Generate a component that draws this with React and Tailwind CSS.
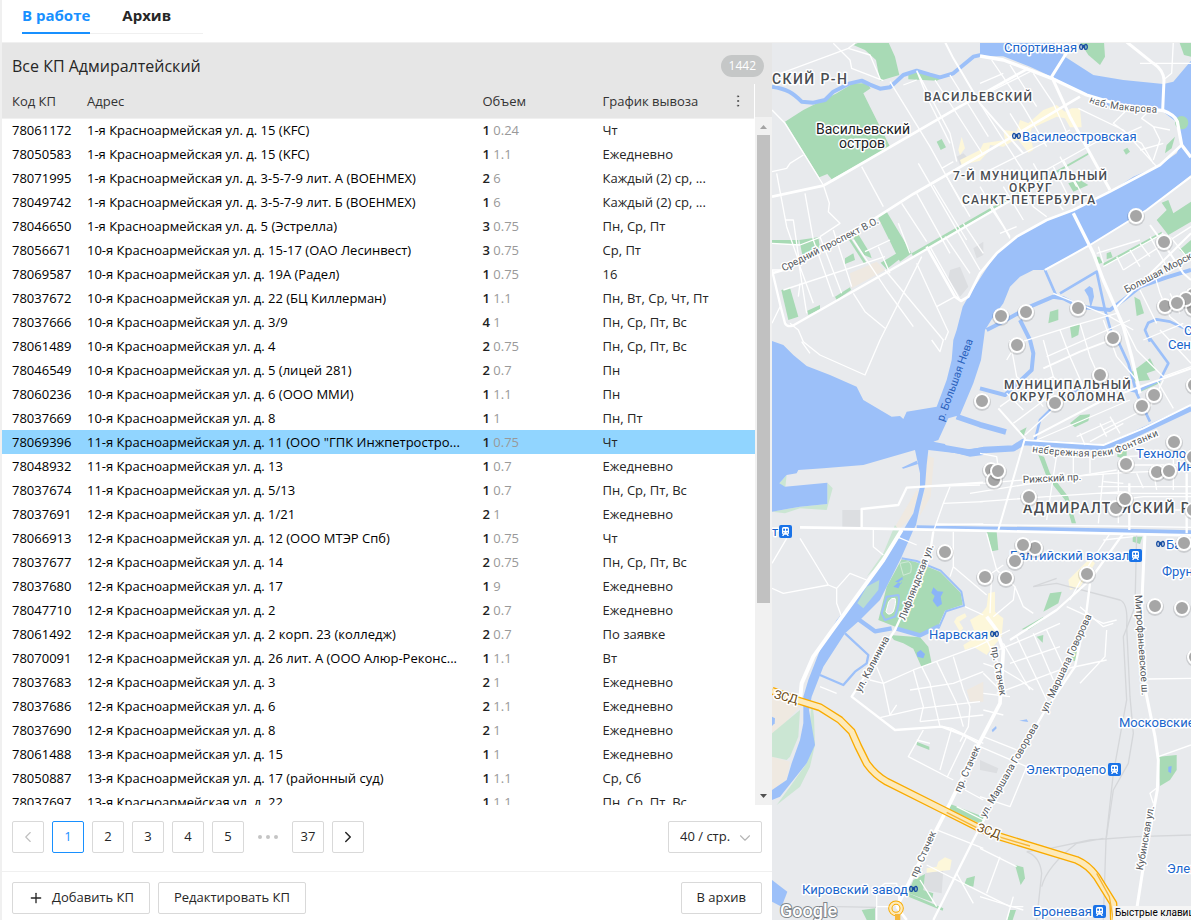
import { ChevronLeft, ChevronRight, ChevronDown, Plus, EllipsisVertical } from "lucide-react";

const ROWS = [
    ["78061172", "1-я Красноармейская ул. д. 15 (KFC)", 1, "0.24", "Чт"],
    ["78050583", "1-я Красноармейская ул. д. 15 (KFC)", 1, "1.1", "Ежедневно"],
    ["78071995", "1-я Красноармейская ул. д. 3-5-7-9 лит. А (ВОЕНМЕХ)", 2, "6", "Каждый (2) ср, ..."],
    ["78049742", "1-я Красноармейская ул. д. 3-5-7-9 лит. Б (ВОЕНМЕХ)", 1, "6", "Каждый (2) ср, ..."],
    ["78046650", "1-я Красноармейская ул. д. 5 (Эстрелла)", 3, "0.75", "Пн, Ср, Пт"],
    ["78056671", "10-я Красноармейская ул. д. 15-17 (ОАО Лесинвест)", 3, "0.75", "Ср, Пт"],
    ["78069587", "10-я Красноармейская ул. д. 19А (Радел)", 1, "0.75", "16"],
    ["78037672", "10-я Красноармейская ул. д. 22 (БЦ Киллерман)", 1, "1.1", "Пн, Вт, Ср, Чт, Пт"],
    ["78037666", "10-я Красноармейская ул. д. 3/9", 4, "1", "Пн, Ср, Пт, Вс"],
    ["78061489", "10-я Красноармейская ул. д. 4", 2, "0.75", "Пн, Ср, Пт, Вс"],
    ["78046549", "10-я Красноармейская ул. д. 5 (лицей 281)", 2, "0.7", "Пн"],
    ["78060236", "10-я Красноармейская ул. д. 6 (ООО ММИ)", 1, "1.1", "Пн"],
    ["78037669", "10-я Красноармейская ул. д. 8", 1, "1", "Пн, Пт"],
    ["78069396", "11-я Красноармейская ул. д. 11 (ООО \"ГПК Инжпетростро...", 1, "0.75", "Чт"],
    ["78048932", "11-я Красноармейская ул. д. 13", 1, "0.7", "Ежедневно"],
    ["78037674", "11-я Красноармейская ул. д. 5/13", 1, "0.7", "Пн, Ср, Пт, Вс"],
    ["78037691", "12-я Красноармейская ул. д. 1/21", 2, "1", "Ежедневно"],
    ["78066913", "12-я Красноармейская ул. д. 12 (ООО МТЭР Спб)", 1, "0.75", "Чт"],
    ["78037677", "12-я Красноармейская ул. д. 14", 2, "0.75", "Пн, Ср, Пт, Вс"],
    ["78037680", "12-я Красноармейская ул. д. 17", 1, "9", "Ежедневно"],
    ["78047710", "12-я Красноармейская ул. д. 2", 2, "0.7", "Ежедневно"],
    ["78061492", "12-я Красноармейская ул. д. 2 корп. 23 (колледж)", 2, "0.7", "По заявке"],
    ["78070091", "12-я Красноармейская ул. д. 26 лит. А (ООО Алюр-Реконс...", 1, "1.1", "Вт"],
    ["78037683", "12-я Красноармейская ул. д. 3", 2, "1", "Ежедневно"],
    ["78037686", "12-я Красноармейская ул. д. 6", 2, "1.1", "Ежедневно"],
    ["78037690", "12-я Красноармейская ул. д. 8", 2, "1", "Ежедневно"],
    ["78061488", "13-я Красноармейская ул. д. 15", 1, "1", "Ежедневно"],
    ["78050887", "13-я Красноармейская ул. д. 17 (районный суд)", 1, "1.1", "Ср, Сб"],
    ["78037697", "13-я Красноармейская ул. д. 22", 1, "1.1", "Пн, Ср, Пт, Вс"],
];

const SELECTED = "78069396";

// Map geometry, in thirds of a pixel
const WATER = [
    "M630 6H850L885 50L970 105L1060 120L1180 132L1210 125L1263 62V405L1130 510L960 615L820 690L790 690L750 710L720 740L700 790L670 830L645 870L633 960L610 1030L570 1125L535 1135L505 1200L490 1205L525 1212L530 1222L570 1228L600 1227L640 1222V1245L600 1250L560 1240L475 1230L470 1275L465 1340L450 1400L438 1455L430 1470L395 1550L330 1680L270 1740L225 1780L160 1880L125 1970L117 2010L135 2115L110 2170L70 2220L30 2270L6 2280V2250L50 2220L65 2170L90 2100L100 2050V1970L115 1920L150 1830L200 1740L300 1620L350 1550L400 1470L430 1420L450 1340V1300L435 1230L280 1275L160 1285L85 1290L80 1300L50 1305L28 1330L45 1340L172 1328V1392L90 1400L6 1415V903L40 915L70 945L110 978L180 1005L260 1040L280 1080L365 1130L390 1128L400 1137L410 1115L500 1100L530 1020L545 960L550 900L560 870L578 800L595 770L640 700L680 640L740 590L830 540L910 510L1020 455L1090 410L1170 375L1220 340L1235 310L1225 250L1175 212L1030 205L950 165L845 110L780 80L690 45H630Z",
    "M6 2520L52 2555L35 2600L6 2585Z",
    "M395 1283L440 1262L444 1272L400 1286Z",
    "M943 750L958 738L968 745L972 770L962 805L955 770Z",
    "M6 2030L15 2035L14 2050L6 2058Z",
    "M665 2070L678 2058L680 2065L668 2077Z",
    "M748 2042L770 2038L775 2046Z",
];

const RIVERS = [
    ["M6 140C50 146 70 160 95 185L130 188L165 180L190 155L240 130L275 122L300 134L330 146L360 142L400 105L440 92L480 104L510 112L550 100L580 75L610 50L640 43H700", 12],
    ["M440 1462L630 1466L830 1468L1030 1472L1263 1477", 13],
    ["M490 1218L600 1238L640 1230L730 1225L760 1206L1000 1222L1080 1190L1263 1104", 19],
    ["M560 1130L630 1154L708 1176", 17],
    ["M650 870L690 850L780 800L850 770L880 775L930 800L1020 810L1060 780L1110 740L1190 712L1263 690", 12],
    ["M750 840L780 900L790 940L785 990L705 1065L630 1045", 12],
    ["M825 690L860 770M870 760L980 695L1005 810L1022 870L1045 905L1075 970L1100 1060L1140 1145", 8],
    ["M1140 905L1125 870L1135 848L1160 838L1200 845L1263 875M1140 895L1195 970L1170 1020L1100 1055L1000 1030L920 1050L850 1100L810 1140L795 1200", 8],
    ["M150 1905L220 1935L255 1895L290 1870L295 1845L225 1780", 7],
    ["M395 1555L440 1563L512 1592L574 1655L582 1697L528 1714L508 1760", 6],
    ["M508 1758L450 1786L380 1766M365 1765L315 1774L265 1738", 13],
];

const GREENS = [
    "M45 245L100 210L200 160L250 130L290 130L302 145L280 160L300 200L350 300L360 320L185 418L172 402L148 412Z",
    "M250 15L270 6H355L375 50L388 105L330 122L318 60L285 30Z",
    "M415 100L470 98L515 115L500 122L415 118Z",
    "M500 305L515 297L528 322L512 330Z",
    "M322 528L350 515L425 640L390 665Z",
    "M425 640L630 522L955 338V344L630 532L430 652Z",
    "M332 668L380 640L392 655L350 688Z",
    "M248 590L262 578L300 640L305 655L282 645Z",
    "M237 600L243 597L290 668L283 672Z",
    "M88 600L145 592L150 625L100 660Z",
    "M225 655L250 640L255 660L225 672Z",
    "M34 750L60 743L85 830L55 840Z",
    "M112 812L150 795V808L115 825Z",
    "M195 770L240 742L243 750L200 780Z",
    "M6 600H85V612H6Z",
    "M930 6H1002L1005 50L990 75L955 45Z",
    "M1228 6H1263V50L1242 45Z",
    "M1215 248A20 20 0 1 1 1255 248A20 20 0 1 1 1215 248Z",
    "M1185 340L1190 315L1215 290L1205 325Z",
    "M1060 330L1072 323L1080 335L1068 344Z",
    "M895 430L930 420L955 435L910 455Z",
    "M1160 540L1190 510L1175 488L1195 480L1210 520L1263 485V545L1195 585Z",
    "M1000 670L1175 575V585L1002 680Z",
    "M980 650H988L998 668L985 672ZM1010 640L1022 635L1028 652L1010 658Z",
    "M1228 630L1263 600V640L1245 645Z",
    "M1093 770L1110 780L1122 820L1100 828Z",
    "M840 815L865 808V840L835 850Z",
    "M900 860L930 850L925 885L905 895Z",
    "M1080 1000L1140 955L1158 990L1130 1000L1140 1020L1090 1025Z",
    "M1108 1052L1165 1020L1172 1028L1112 1055Z",
    "M900 1150L930 1125L960 1123L955 1143L915 1162Z",
    "M1042 1230H1070V1260L1042 1250Z",
    "M805 1245L822 1250L840 1300L895 1370L918 1450H905L885 1380L830 1310Z",
    "M650 1475H680L685 1530L665 1534Z",
    "M1088 1490H1117L1110 1512L1088 1505Z",
    "M840 1660L875 1655L865 1690L820 1715Z",
    "M755 1768L820 1730L822 1738L775 1770Z",
    "M745 1175L770 1162L760 1190Z",
    "M395 1558L435 1565L510 1595L572 1658L578 1694L525 1712L505 1758L455 1785L380 1762L325 1740L350 1640Z",
    "M360 1785L450 1792L475 1820L485 1870L455 1882L430 1826L400 1810L372 1800Z",
    "M440 2105L478 2120V2130L440 2115Z",
    "M535 2290L640 2330V2355L540 2310Z",
    "M430 2520L465 2502L460 2550L490 2560L485 2585L415 2560Z",
    "M590 2515L615 2508L610 2540L582 2535Z",
    "M275 2610L315 2605V2640H290Z",
    "M415 2560L520 2605L518 2612L410 2568Z",
    "M1167 2150L1220 2145V2190L1200 2220L1170 2238Z",
    "M905 1820L920 1812V1865L905 1860Z",
    "M735 2475L760 2482L765 2515L752 2535Z",
    "M800 1790L820 1785L818 1808Z",
    "M720 2610H738L728 2640H712Z",
];

const PALE_GREENS = [
    "M6 2080L90 2010L85 2090L60 2150L50 2160L6 2150Z",
    "M125 1980L132 2030L135 2115L120 2180L90 2240L20 2295L60 2240L110 2170Z",
    "M28 1330L50 1305L45 1350L30 1350Z",
    "M172 1328L188 1345L170 1410L90 1405L45 1420L6 1415L90 1400L172 1392Z",
    "M375 1455L390 1475L340 1560L290 1610L340 1540Z",
];

const TANS = [
    "M240 700L320 665L345 690L245 745Z",
    "M6 1955L90 2000L6 2090Z",
    "M6 2150L60 2165L50 2220L6 2250Z",
    "M470 1245L492 1255L482 1370L448 1430L465 1340Z",
    "M440 1350L450 1360L425 1430L385 1470L375 1460Z",
    "M590 1950L640 1925V1985H600Z",
    "M1170 390L1235 320L1230 345Z",
];

const YELLOWS = [
    "M820 210L860 195L885 215L905 205L930 205L935 262L900 262L885 235L860 230L785 265L780 280L790 330L775 338L745 300L725 305L700 320L660 315L655 335L630 362L575 375L570 360L630 330L640 310L705 300L700 270L740 275L750 240L775 250Z",
    "M575 290L585 325L570 345L565 330Z",
    "M655 1660L675 1655V1715L700 1735L695 1790L665 1825L650 1845L610 1820L585 1830L580 1815L620 1790L600 1740L635 1720L650 1700Z",
    "M585 1720L560 1732L552 1745L570 1775L580 1765L568 1745L590 1730Z",
    "M895 1620L960 1555L975 1570L930 1640L900 1650Z",
    "M505 2465L525 2452L545 2460L540 2490L470 2498V2485L500 2480Z",
];

const GRAYS = [
    "M217 1410H272V1465H217Z",
    "M540 690L570 680L595 740L570 770L535 715Z",
    "M560 350L580 340L600 360L570 375Z",
    "M465 2500L520 2490L515 2560L460 2550Z",
    "M630 2160L685 2185L680 2200L630 2190Z",
    "M610 625L640 605V645L620 655Z",
];

const MINOR_ROADS = [
    "M190 10L240 60L245 85L340 122M235 25L300 45L332 120M6 110L235 25L255 10M6 210L45 250L160 435",
    "M360 125L480 320L580 500M440 92L540 280L560 365M495 120L640 345M540 105L655 290M400 135L440 120M440 92L475 180L540 310",
    "M275 380L340 500M445 370L630 690M395 490L470 605M440 460L540 640M490 435L590 600M530 410L600 530M515 385L550 365",
    "M6 395L50 385L60 370L100 345M20 400L35 480L50 560L85 660L110 820M160 435L178 490L175 515L210 550L150 590M45 540H70L90 680L130 790",
    "M6 610L90 615L150 592M105 460L130 600L190 770M150 590L215 760M190 570L245 740M6 690L60 690M40 750L345 650M250 600L350 750L430 860M90 730L85 770",
    "M345 690L520 900L510 935L485 900M455 650L330 900L285 1005L150 945L100 905L85 870L60 850M250 760L285 815L345 865M285 635L360 600M325 620L360 700",
    "M440 670L500 800L555 770M500 800L535 875L525 900M480 620L570 780M525 590L600 700M580 550L640 640M385 550L420 640",
    "M630 190L700 300L790 440M665 60L760 200L830 320M720 75L800 200M790 100L850 190L900 300M700 100L630 130M790 90L630 170",
    "M660 500L700 560L720 595M700 440L760 540M740 410L790 500L830 530M790 370L840 460L880 510M850 380L900 480M880 360L940 470M630 440L720 590M690 580L740 560",
    "M720 450L990 300M640 400L900 270M870 350L920 440M720 220L770 300",
    "M925 205L1060 270L1160 380M1065 215L1030 250L1070 280L1115 260M1130 220L1115 235L1150 260L1170 300L1150 360M1060 280L1115 310L1150 370M1150 260L1200 270M1110 330L1180 310",
    "M850 760L1020 830L1090 870M980 640L1110 600M1000 680L1180 580M985 620L1000 670M1040 650L1060 690M1080 630L1110 680M1110 610L1140 650M1140 590L1190 680M1200 590L1250 650M1060 690L1263 560",
    "M710 960L740 910L900 860L1040 820M830 950L1080 840M720 900L740 1010L800 1060M820 900L850 1010L900 1060M870 870L900 950L940 1040M930 850L960 950L1000 1040M1000 840L1040 950L1100 1020",
    "M1150 690L1170 760L1200 830L1263 880M1110 750L1160 850M1200 760L1230 820M1050 830L1100 930L1180 1010L1263 980M1120 900L1240 850M1170 870L1263 970M1210 1105L1160 1020",
    "M690 1100L760 1050L850 1010M730 1150L850 1060M765 1185L880 1080M710 1060L760 1110M760 1030L820 1100M800 1200L1080 1080M920 1190L1030 1140M960 1205L1060 1150M930 1180L945 1215M990 1150L1010 1190M1020 1130L1050 1180M1000 1170L1140 1100L1180 1020",
    "M640 1330L760 1320L1060 1298L1263 1290M630 1385L830 1370L1060 1355M860 1245L830 1440M910 1250V1300M960 1250V1300M1000 1300L985 1450M1045 1290V1450M630 1240L680 1250L690 1320M985 1340H1263M985 1360H1263M1060 1250L1263 1240M1060 1275H1263",
    "M1040 1380L1120 1370H1263M1100 1300L1120 1345M1150 1290L1160 1350M1210 1250V1350M1000 1325L1060 1330M1080 1410H1263",
    "M520 1390L640 1385M495 1455L640 1452M540 1340L520 1390L490 1475M455 1340L630 1335",
    "M310 1465V1520L340 1545M90 1495L130 1560L175 1635L40 1660L6 1645M50 1495L6 1570M175 1635L200 1645L240 1600L290 1620M200 1645V1690L215 1730",
    "M550 1475V1580L650 1665M550 1580L540 1610M585 1700L640 1725",
    "M650 1480L680 1590L735 1640L730 1680L670 1730M700 1575L665 1600L660 1720M1020 1480L960 1570L900 1680M735 1640L760 1700L790 1720M890 1700L1000 1750L1040 1740M1000 1500L1090 1490",
    "M320 1880L340 1930L360 2025M300 1920L340 1930L430 1890L620 1820L720 1770M430 1890L460 2000L450 2045M455 1880L480 1930L510 2060M500 1865L560 1990L580 2060M550 1850L580 1950L600 2000L595 2060L570 2105",
    "M330 2033L450 2005L630 1985M360 2025L380 1995M420 1950L550 1930L640 1895M450 2045L640 2025M545 2065L510 2190M590 2090L530 2215M460 2070L415 2150L550 2220M440 2100L480 2110M520 2060L545 2065L640 2110",
    "M640 1870L700 1890L750 1920L790 1950M660 1840L780 1790L870 1750M720 1870L870 1820M700 1810L780 1950M740 1790L830 1980M790 1780L850 1920M830 1770L890 1900M680 1960L870 1890L1010 1860M640 1780L700 1900M1010 1770L1005 1850L930 1930",
    "M640 1960L720 1970M640 1900L700 1960M640 2010L700 2025M640 2090L740 2130M630 2120L770 2180L720 2300L630 2270M500 2370L640 2425M470 2475L640 2560L720 2600H760M585 2250L640 2280M560 2300L640 2340",
    "M630 2570L760 2610M630 2425L740 2480M690 2450L650 2560M730 2570L710 2640M500 2600L450 2520M560 2500L610 2590M320 2600H370M345 2530L320 2550V2640M345 2530H380L390 2600",
    "M1135 1917L1263 1915M1165 2150L1263 2115M1150 2290L1140 2260L1165 2240M930 1700L1000 1760L1030 1750",
    "M380 1490L440 1515M600 1360L1040 1290M1110 70H1263M1180 120L1205 100L1210 6",
    "M150 1940L200 1960M6 850L30 800M95 905L120 940",
];

const ROADS = [
    ["M6 470L160 437L190 420L560 205L775 85", 8],
    ["M6 700L40 690L300 545L430 462L630 347L930 170", 8],
    ["M6 690L32 800L45 850Q52 862 68 857L400 668L630 535L860 400", 7],
    ["M525 6L550 55L630 190L760 340", 6],
    ["M630 48L700 60L845 115L950 165L1060 198L1180 212Q1215 225 1222 245L1235 315L1263 352", 10],
    ["M895 30L845 110L900 230L1020 450", 9],
    ["M1070 6L1150 70Q1180 90 1182 120L1178 212", 9],
    ["M1235 315L1170 375L1020 455L910 510L830 540L740 590L680 640L630 700L595 770L573 783L555 770L470 620", 8],
    ["M910 520L970 640L1000 720L1035 800L1060 860L1085 950L1110 1060", 10],
    ["M825 690L960 615L1130 510L1263 410", 6],
    ["M1140 555L1180 610L1240 700L1263 720M1263 580L1040 800M820 985L930 935L1035 895", 6],
    ["M685 1105L765 1195L685 1470", 6],
    ["M765 1200L1000 1215L1120 1165L1263 1095M790 1190L1000 1080L1263 985", 6],
    ["M275 1465V1407L385 1395L410 1343L460 1340L640 1328", 7],
    ["M90 1462L275 1465L630 1472L1263 1486", 8],
    ["M500 1452L690 1455L1020 1458L1263 1462", 4],
    ["M395 1470L340 1560L180 1780L130 1850L95 1930L90 1980", 12],
    ["M490 1475L480 1540L375 1770L245 1970L375 2070L515 2060L580 2085L625 2110", 7],
    ["M650 1730L680 1770L700 1830L690 1990L630 2105L540 2290L380 2600", 11],
    ["M1060 1480L960 1620L860 1710L720 1800", 7],
    ["M1078 1330V1470M1250 1300V1480", 7],
    ["M960 1630L950 1710L930 1810L915 1880L820 2020L700 2230L610 2400L490 2640", 7],
    ["M1125 1480L1115 1700L1120 1920L1155 2090L1165 2160L1162 2250L1120 2480L1095 2640", 9],
    ["M380 2600L410 2640", 8],
];

const RAILS = [
    "M790 1640L860 1630L1050 1680Q1075 1690 1070 1760L1080 1970L1090 2080L1075 2170L1030 2250L1008 2400L1000 2640",
    "M1100 1480L1095 1700L1060 1790L1070 1980L1030 2200L1008 2400",
    "M1263 2385L1100 2390L960 2400L840 2425L770 2435M770 2435Q810 2450 815 2500L800 2640M815 2540Q830 2480 920 2410L1000 2395",
    "M200 2600L320 2602M790 1640L860 1615",
];

const HIGHWAY = "M6 1952L80 1980L150 2002L210 2040L245 2075L265 2120L290 2170Q315 2205 350 2225L520 2310L630 2365L690 2390L920 2460Q955 2475 980 2510L1030 2590L1032 2640";

const PINS = [
    [1136, 216], [1164, 242], [1078, 308], [1026, 312], [1001, 316], [1193, 295], [1193, 308], [1186, 299], [1165, 306],
    [1177, 303], [1017, 345], [1113, 338], [1100, 375], [1154, 395], [1142, 406], [1055, 403], [982, 401], [1194, 385],
    [1174, 442], [1126, 464], [1157, 472], [1169, 471], [1193, 457], [991, 470], [994, 480], [998, 471], [1029, 497],
    [1116, 508], [1125, 499], [1193, 510], [1184, 543], [1035, 548], [1023, 545], [1015, 561], [985, 577], [1006, 578],
    [1087, 574], [945, 552], [1155, 606], [1182, 608], [1195, 657],
];

const AREAS = [
    ["СКИЙ Р-Н", 772, 84, 14],
    ["ВАСИЛЬЕВСКИЙ", 924, 101, 12],
    ["7-Й МУНИЦИПАЛЬНЫЙ", 953, 180, 12],
    ["ОКРУГ", 1009, 192, 12],
    ["САНКТ-ПЕТЕРБУРГА", 962, 204, 12],
    ["МУНИЦИПАЛЬНЫЙ", 1004, 389, 12],
    ["ОКРУГ КОЛОМНА", 1010, 401, 12],
    ["АДМИРАЛТЕЙСКИЙ Р-Н", 1023, 513, 14],
];

const STATIONS = [
    ["Спортивная", 1004, 52],
    ["Василеостровская", 1022, 141],
    ["Сен", 1168, 349],
    ["С", 1184, 335],
    ["Техноло", 1136, 458],
    ["Инс", 1177, 471],
    ["Балтийский вокзал", 1010, 560],
    ["Ба", 1166, 549],
    ["Фрун", 1162, 576],
    ["т", 772, 536],
    ["Нарвская", 929, 639],
    ["Московские", 1119, 727],
    ["Электродепо", 1026, 774],
    ["Элек", 1167, 873],
    ["Кировский завод", 802, 894],
    ["Броневая", 1033, 916],
];

// text, centre x, centre y, angle
const STREETS = [
    ["Средний проспект В.О.", 830, 244, -27],
    ["Большая Морская", 1163, 270, -28],
    ["Рижский пр.", 1052, 478, -3],
    ["Лифляндская ул.", 916, 582, -69],
    ["ул. Калинина", 872, 664, -62],
    ["пр. Стачек", 999, 671, 80],
    ["ул. Маршала Говорова", 1066, 663, -65],
    ["ул. Маршала Говорова", 1009, 770, -60],
    ["пр. Стачек", 967, 769, -66],
    ["пр. Стачек", 923, 854, -66],
    ["Митрофаньевское ш.", 1142, 645, 86],
    ["Кубинская ул.", 1145, 838, -80],
    ["ЗСД", 786, 697, 14],
    ["ЗСД", 989, 831, 20],
];

function MetroIcon({ x, y }) {
    return (
        <g transform={`translate(${x} ${y})`} fill="none" stroke="#1a4fa3" strokeWidth="1.4" strokeLinecap="round">
            <path d="M1.6 1.6C.2 3 .4 6.400 2.300 6.400C4.200 6.400 3.400 1.500 2.500 1.500M7.400 1.600C8.800 3 8.600 6.400 6.700 6.400C4.800 6.400 5.600 1.500 6.500 1.500M4.500 2.500V4.500" />
        </g>
    );
}

function TrainIcon({ x, y }) {
    return (
        <g transform={`translate(${x} ${y})`}>
            <rect width="13" height="13" rx="2" fill="#1a73e8" />
            <path d="M4.500 2h4a1.500 1.500 0 0 1 1.500 1.500v4.500a1.500 1.500 0 0 1-1 1.400l1 1.600h-1.500l-.8-1.300h-2.400l-.8 1.300h-1.500l1-1.600a1.500 1.500 0 0 1-1-1.400v-4.500a1.500 1.500 0 0 1 1.500-1.500z" fill="#fff" />
            <path d="M4.200 3.700h1.800v2h-1.800zM7 3.700h1.800v2h-1.800zM4.300 7.300h1v1h-1zM7.700 7.300h1v1h-1z" fill="#1a73e8" />
        </g>
    );
}

function CityMap() {
    return (
        <div className="relative overflow-hidden bg-[#e8eaed] min-h-0">
            <svg
                viewBox="772 43 419 877"
                preserveAspectRatio="xMinYMin slice"
                className="block w-full h-full font-[Roboto,sans-serif]"
                role="img"
                aria-label="Карта"
            >
                <g transform="translate(770 40) scale(0.33333)" fill="none" strokeLinejoin="round">
                    {TANS.map((d) => <path key={d} d={d} fill="#efe9e1" />)}
                    {GRAYS.map((d) => <path key={d} d={d} fill="#dcdee1" />)}
                    {YELLOWS.map((d) => <path key={d} d={d} fill="#fdf7da" />)}
                    {PALE_GREENS.map((d) => <path key={d} d={d} fill="#cbe6d3" />)}
                    {WATER.map((d) => <path key={d} d={d} fill="#9cc0f9" />)}
                    {GREENS.map((d) => <path key={d} d={d} fill="#a8dab5" />)}
                    <path d="M262 1690L290 1640L328 1620L325 1650L280 1705Z" fill="#b9ddd0" />
                    <path d="M440 1838L452 1830L465 1842L460 1855L442 1850Z" fill="#8ab4f8" />
                    <path d="M490 1642L503 1654L520 1655L512 1670L516 1692L502 1701L488 1682L494 1668L484 1658Z" fill="#8ab4f8" />
                    <path d="M370 1640L400 1615L385 1645ZM375 1625L395 1630L398 1610Z" fill="#8ab4f8" />
                    <path d="M390 1570L415 1565Q428 1570 422 1598L400 1606Z" stroke="#cfe9d6" strokeWidth="3" />
                    <path d="M1195 2180L1205 2178L1203 2200L1195 2195Z" fill="#8ab4f8" />
                    <path d="M350 1670L385 1665Q392 1680 375 1730L345 1740L335 1720Z" stroke="#9cc0f9" strokeWidth="6" />
                    <path d="M356 1685Q365 1672 375 1675Q380 1685 370 1715Q355 1730 348 1715Z" fill="#e8eaed" stroke="#fff" strokeWidth="3" />
                    {RAILS.map((d) => <path key={d} d={d} stroke="#d5d7da" strokeWidth="4" />)}
                    {RIVERS.map(([d, w]) => <path key={d} d={d} stroke="#9cc0f9" strokeWidth={w} />)}
                    {MINOR_ROADS.map((d) => <path key={d} d={d} stroke="#fff" strokeWidth="4" />)}
                    {ROADS.map(([d, w]) => <path key={d} d={d} stroke="#fff" strokeWidth={w} />)}
                    <path d={HIGHWAY} stroke="#f9ab00" strokeWidth="24" />
                    <path d={HIGHWAY} stroke="#fdeaba" strokeWidth="16" />
                    <path d="M530 2317L630 2368L685 2390L780 2418M980 2500L1018 2570L1030 2640" stroke="#f5b73b" strokeWidth="4" />
                    <circle cx="378" cy="2605" r="17" stroke="#f9ab00" strokeWidth="13" />
                    <circle cx="378" cy="2605" r="17" stroke="#fdeaba" strokeWidth="7" />
                    <path d="M383 2622V2640" stroke="#f5b73b" strokeWidth="16" />
                </g>

                <g stroke="#fff" strokeWidth="3" strokeLinejoin="round">
                    {AREAS.map(([text, x, y, size]) => (
                        <text key={text} x={x} y={y} fontSize={size} fill="#494d52" className="font-medium tracking-widest [paint-order:stroke]">{text}</text>
                    ))}
                    <text x="863" y="134" fontSize="14" fill="#202124" textAnchor="middle" className="[paint-order:stroke]">Васильевский</text>
                    <text x="862" y="148" fontSize="14" fill="#202124" textAnchor="middle" className="[paint-order:stroke]">остров</text>
                    {STREETS.map(([text, x, y, angle]) => (
                        <text
                            key={`${text}${y}`}
                            x={x}
                            y={y}
                            fontSize={text === "ЗСД" ? 12 : 10}
                            fill={text === "ЗСД" ? "#6b4a12" : "#54585d"}
                            textAnchor="middle"
                            dominantBaseline="central"
                            transform={`rotate(${angle} ${x} ${y})`}
                            className="[paint-order:stroke]"
                        >
                            {text}
                        </text>
                    ))}
                    <path id="makarova" d="M1089 102Q1106 111 1162 113" fill="none" stroke="none" />
                    <path id="fontanka" d="M1032 452Q1105 462 1125 450L1162 434" fill="none" stroke="none" />
                    <text fontSize="10" fill="#54585d" className="[paint-order:stroke]">
                        <textPath href="#makarova">наб. Макарова</textPath>
                    </text>
                    <text fontSize="10" fill="#54585d" className="[paint-order:stroke]">
                        <textPath href="#fontanka">набережная реки Фонтанки</textPath>
                    </text>
                    {STATIONS.map(([text, x, y]) => (
                        <text key={text} x={x} y={y} fontSize="13" fill="#1a66cc" className="[paint-order:stroke]">{text}</text>
                    ))}
                </g>
                <text x="955" y="380" fontSize="11" fill="#2b62bd" textAnchor="middle" dominantBaseline="central" transform="rotate(-70 955 380)">р. Большая Нева</text>

                <MetroIcon x={1079} y={43} />
                <MetroIcon x={1012} y={132} />
                <MetroIcon x={1156} y={540} />
                <MetroIcon x={990} y={630} />
                <MetroIcon x={909} y={885} />
                <TrainIcon x={779} y={525} />
                <TrainIcon x={1129} y={549} />
                <TrainIcon x={1108} y={763} />
                <TrainIcon x={1093} y={905} />

                {PINS.map(([x, y], i) => (
                    <g key={i}>
                        <circle cx={x} cy={y + 1} r="9" fill="#000" opacity="0.12" />
                        <circle cx={x} cy={y} r="7" fill="#a6a6a6" stroke="#fff" strokeWidth="2" />
                    </g>
                ))}

                <text x="780" y="917" fontSize="18" fill="#fff" stroke="#80868b" strokeWidth="2" className="font-medium [paint-order:stroke]">Google</text>
            </svg>
            <a href="#keys" className="absolute left-[341px] bottom-0 h-3.5 pl-0.5 bg-[#f5f5f5] text-black text-[10px] leading-[14px] whitespace-nowrap font-[Roboto,sans-serif]">
                Быстрые клавиши
            </a>
        </div>
    );
}

function Scrollbar() {
    return (
        <div className="w-[17px] shrink-0 flex flex-col">
            <div className="h-[33px] bg-[#e6e6e6]"></div>
            <div className="flex-1 bg-[#f1f1f1] flex flex-col items-center">
                <svg width="17" height="18" viewBox="0 0 17 18"><path d="M5 12L8.500 8L12 12Z" fill="#a3a3a3" /></svg>
                <div className="w-[13px] h-[68%] bg-[#c1c1c1]"></div>
                <svg width="17" height="17" viewBox="0 0 17 17" className="mt-auto"><path d="M5 6L8.500 10L12 6Z" fill="#505050" /></svg>
            </div>
        </div>
    );
}

function PointsTable() {
    return (
        <div className="flex flex-1 min-h-0">
            <div className="flex-1 min-w-0 overflow-hidden">
                <table className="w-full table-fixed text-left text-[13px] leading-5">
                    <colgroup>
                        <col className="w-[75px]" />
                        <col />
                        <col className="w-[120px]" />
                        <col className="w-[127px]" />
                        <col className="w-[35px]" />
                    </colgroup>
                    <thead>
                        <tr className="h-[34px] bg-[#e6e6e6] border-b border-[#f0f0f0] text-[#333]">
                            <th className="font-normal pl-2.5">Код КП</th>
                            <th className="font-normal pl-2.5">Адрес</th>
                            <th className="font-normal pl-2.5">Объем</th>
                            <th className="font-normal pl-2.5">График вывоза</th>
                            <th className="border-r border-white">
                                <button aria-label="Меню" className="block ml-2.5">
                                    <EllipsisVertical size={16} strokeWidth={1} />
                                </button>
                            </th>
                        </tr>
                    </thead>
                    <tbody>
                        {ROWS.map(([code, address, count, volume, schedule]) => (
                            <tr key={code} className={code === SELECTED ? "h-6 bg-[#91d5ff]" : "h-6"}>
                                <td className="pl-2.5 text-black">{code}</td>
                                <td className="pl-2.5 text-black truncate">{address}</td>
                                <td className="pl-2.5">
                                    <span className="font-semibold text-[#222]">{count}</span>{" "}
                                    <span className="text-[#999]">{volume}</span>
                                </td>
                                <td className="pl-2.5 whitespace-nowrap text-[#262626]" colSpan={2}>{schedule}</td>
                            </tr>
                        ))}
                    </tbody>
                </table>
            </div>
            <Scrollbar />
        </div>
    );
}

function Pagination() {
    const item = "size-8 flex items-center justify-center border border-[#d9d9d9] rounded-xs";
    return (
        <div className="flex items-center gap-2 px-2.5 pt-4 pb-[18px] text-[13px] text-[#262626]">
            <button aria-label="Назад" disabled className={`${item} text-[#bfbfbf]`}><ChevronLeft size={18} strokeWidth={1.5} /></button>
            <button className="size-8 flex items-center justify-center border border-[#1890ff] rounded-xs font-medium text-[#1890ff]">1</button>
            {[2, 3, 4, 5].map((page) => (
                <button key={page} className={item}>{page}</button>
            ))}
            <span className="size-8 flex items-center justify-center gap-1">
                {[0, 1, 2].map((dot) => (
                    <span key={dot} className="size-1 rounded-full bg-[#c4c4c4]"></span>
                ))}
            </span>
            <button className={item}>37</button>
            <button aria-label="Вперед" className={item}><ChevronRight size={18} strokeWidth={2} /></button>
            <div className="relative ml-auto">
                <select aria-label="Размер страницы" className="appearance-none w-[94px] h-8 pl-[11px] border border-[#d9d9d9] rounded-xs bg-white">
                    <option>40 / стр.</option>
                </select>
                <ChevronDown size={18} strokeWidth={1.5} className="absolute right-2 top-2 text-[#b5b5b5] pointer-events-none" />
            </div>
        </div>
    );
}

function App() {
    const button = "h-8 px-[15px] flex items-center border border-[#d9d9d9] rounded-xs bg-white";
    return (
        <div className="h-screen flex flex-col bg-white text-[#262626] font-['Open_Sans','Noto_Sans',sans-serif] overflow-hidden">
            <nav className="h-[43px] shrink-0 border-b border-[#f0f0f0] border-l-2 pl-5">
                <div className="inline-flex h-[34px] gap-8 pr-8 border-b border-[#f0f0f0] text-[15px] font-bold">
                    <button className="h-[34px] pb-0.5 border-b-2 border-[#1890ff] text-[#1890ff]">В работе</button>
                    <button className="h-[34px] pb-0.5 border-b-2 border-transparent">Архив</button>
                </div>
            </nav>

            <main className="flex-1 min-h-0 grid grid-cols-[minmax(0,770fr)_minmax(0,419fr)] grid-rows-[minmax(0,1fr)] border-l-2 border-[#f0f0f0]">
                <section className="flex flex-col min-h-0">
                    <div className="h-[41px] shrink-0 flex items-center justify-between px-2 pt-1 bg-[#e6e6e6]">
                        <h1 className="pl-0.5 text-base font-medium">Все КП Адмиралтейский</h1>
                        <span className="h-[22px] px-2 flex items-center rounded-full bg-[#c5c7c7] text-white text-xs">1442</span>
                    </div>
                    <PointsTable />
                    <Pagination />
                    <div className="flex gap-2 border-t border-[#f0f0f0] px-2.5 pt-2.5 pb-1.5 text-[13px]">
                        <button className={button}>
                            <Plus size={16} className="mr-2" />
                            Добавить КП
                        </button>
                        <button className={button}>Редактировать КП</button>
                        <button className={`${button} ml-auto`}>В архив</button>
                    </div>
                </section>
                <CityMap />
            </main>
        </div>
    );
}

export default App;
